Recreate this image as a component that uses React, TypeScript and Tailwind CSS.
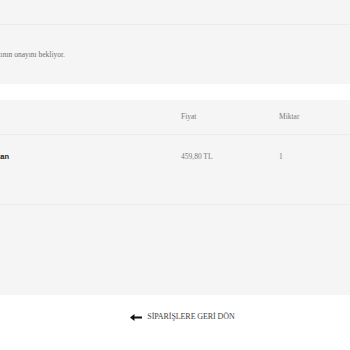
const serif = "font-['Liberation_Serif',serif]";

const BackArrow = () => (
  <svg width="12" height="7" viewBox="0 0 12 7" className="shrink-0">
    <path d="M0 3.5 L4.5 0 L4.5 2.6 L12 2.6 L12 4.4 L4.5 4.4 L4.5 7 Z" fill="#111" />
  </svg>
);

export default function App() {
  return (
    <div className={`w-[350px] min-h-[350px] bg-white overflow-hidden ${serif}`}>
      <div className="bg-[#f5f5f5] h-[84px]">
        <div className="h-[25px] border-b border-[#ececec]" />
        <div className="pt-[26px] flex justify-end w-[65px]">
          <span className="whitespace-nowrap text-[7.5px] leading-none text-[#6f6f6f]">
            Siparişiniz satıcının onayını bekliyor.
          </span>
        </div>
      </div>

      <div className="mt-[16px] bg-[#f5f5f5] h-[195px] text-[7.5px] text-[#7a7a7a]">
        <div className="grid grid-cols-[181px_98px_71px] h-[35px] items-center border-b border-[#ececec]">
          <div />
          <div>Fiyat</div>
          <div>Miktar</div>
        </div>
        <div className="grid grid-cols-[181px_98px_71px] h-[70px] pt-[18px] border-b border-[#ececec]">
          <div className="flex justify-end w-[9px]">
            <span className="whitespace-nowrap font-['Liberation_Sans',sans-serif] font-bold text-[#222] text-[7.5px] leading-none">
              Kadın Kaftan
            </span>
          </div>
          <div className="leading-none">459,80 TL</div>
          <div className="leading-none">1</div>
        </div>
      </div>

      <div className="flex justify-center items-center gap-[5px] pt-[16px] pl-[15px]">
        <BackArrow />
        <span className="text-[8px] uppercase text-[#444] tracking-[-0.01em]">SİPARİŞLERE GERİ DÖN</span>
      </div>
    </div>
  );
}
